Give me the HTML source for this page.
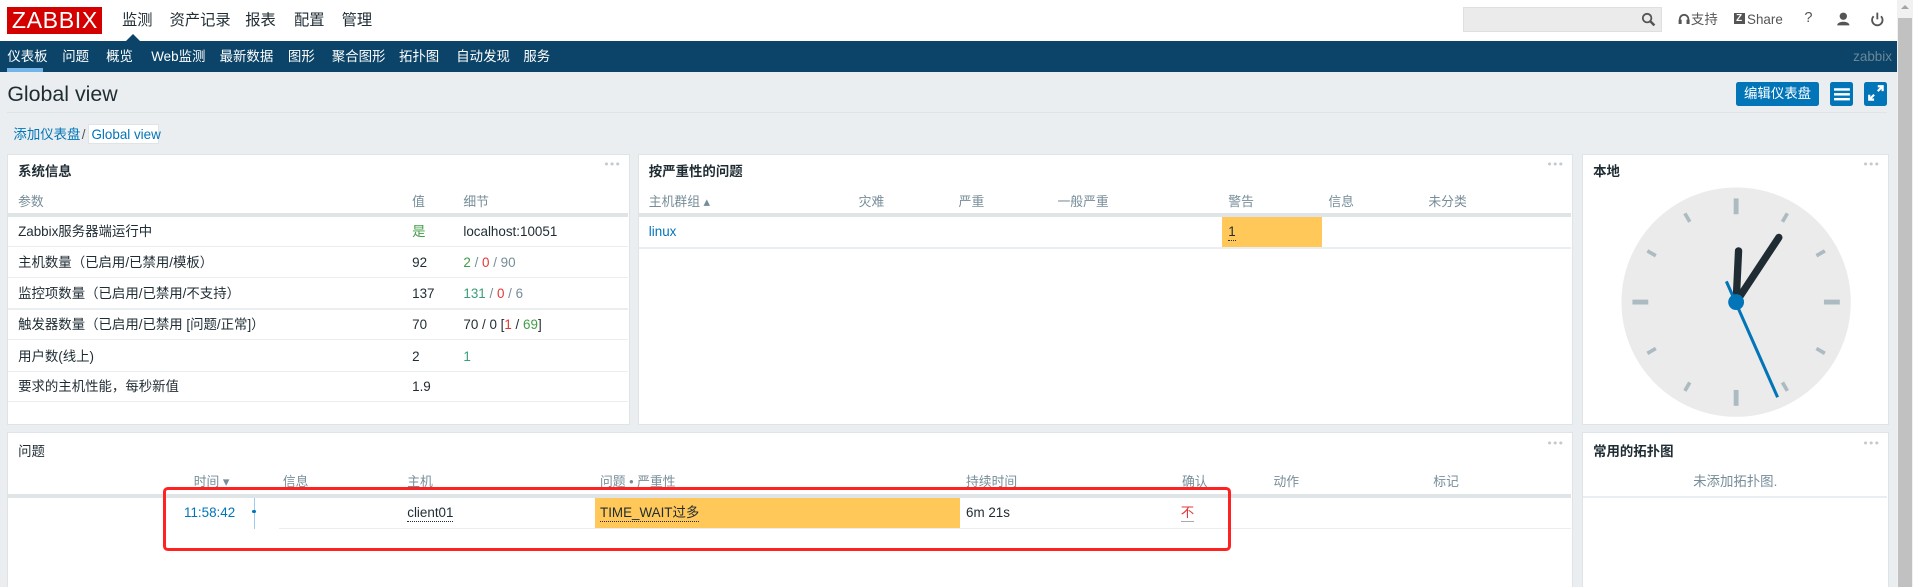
<!DOCTYPE html>
<html><head><meta charset="utf-8"><style>
html,body{margin:0;padding:0;width:1913px;height:587px;overflow:hidden;background:#ebeef0}
#w{zoom:1.22;position:relative;width:1568px;height:481px;font-family:"Liberation Sans","Noto Sans CJK SC",sans-serif;font-size:11px;color:#1f2c33}
.a{position:absolute;white-space:nowrap;line-height:13px}
.hdr{position:absolute;left:0;top:0;width:1555px;height:34px;background:#fff}
.nav{position:absolute;left:0;top:34px;width:1555px;height:25px;background:#0b4468}
.nav span{position:absolute;top:7px;color:#fff;font-size:11px;line-height:12px}
.wg{position:absolute;background:#fff;border:1px solid #dfe4e7;box-sizing:border-box}
.t{font-weight:bold;font-size:11px;color:#1f2c33}
.th{color:#768d99;font-size:10.5px}
.dots{position:absolute;right:6px;top:3px;color:#c3cbd0;font-size:6px;letter-spacing:1px;line-height:10px}
.ln{position:absolute;height:1px;background:#ebeef0}
.ln2{position:absolute;height:3px;background:#dfe4e7}
.g{color:#429e47}.r{color:#e33734}.gr{color:#768d99}.b{color:#0275b8}
</style></head><body><div id="w">
<div class="hdr">
 <div class="a" style="left:6px;top:6px;width:78px;height:22px;background:#d40000;color:#fff;font-size:19px;line-height:22px;text-align:center;letter-spacing:0.5px">ZABBIX</div>
 <span class="a" style="left:100px;top:10px;font-size:12.5px;line-height:14px">监测</span>
 <span class="a" style="left:139px;top:10px;font-size:12.5px;line-height:14px">资产记录</span>
 <span class="a" style="left:201px;top:10px;font-size:12.5px;line-height:14px">报表</span>
 <span class="a" style="left:241px;top:10px;font-size:12.5px;line-height:14px">配置</span>
 <span class="a" style="left:280px;top:10px;font-size:12.5px;line-height:14px">管理</span>
 <div class="a" style="left:103px;top:28px;width:0;height:0;border-left:6px solid transparent;border-right:6px solid transparent;border-bottom:6px solid #0b4468"></div>
 <div class="a" style="left:1199px;top:6px;width:163px;height:20px;background:#ebebeb;border:1px solid #dfdfdf;box-sizing:border-box"></div>
 <svg class="a" style="left:1345px;top:10px" width="12" height="12"><circle cx="5" cy="5" r="3.5" fill="none" stroke="#555" stroke-width="1.5"/><line x1="7.5" y1="7.5" x2="11" y2="11" stroke="#555" stroke-width="2"/></svg>
 <svg class="a" style="left:1375px;top:11px" width="10" height="10"><path d="M1.5 7V5a3.5 3.5 0 0 1 7 0v2" fill="none" stroke="#555" stroke-width="1.5"/><rect x="0.5" y="5.5" width="2.5" height="3.5" fill="#555"/><rect x="7" y="5.5" width="2.5" height="3.5" fill="#555"/></svg>
 <span class="a" style="left:1386px;top:10px;color:#555">支持</span>
 <div class="a" style="left:1421px;top:11px;width:9px;height:9px;background:#555;color:#fff;font-size:8px;font-weight:bold;line-height:9px;text-align:center">Z</div>
 <span class="a" style="left:1432px;top:10px;color:#555">Share</span>
 <span class="a" style="left:1479px;top:9px;color:#555;font-size:12px">?</span>
 <svg class="a" style="left:1505px;top:10px" width="12" height="12"><circle cx="6" cy="3.5" r="3" fill="#555"/><path d="M1 11c0-4 10-4 10 0z" fill="#555"/></svg>
 <svg class="a" style="left:1533px;top:10px" width="12" height="12"><path d="M3 3.5a4.3 4.3 0 1 0 6 0" fill="none" stroke="#555" stroke-width="1.5"/><line x1="6" y1="0.5" x2="6" y2="6" stroke="#555" stroke-width="1.5"/></svg>
</div>
<div class="nav">
 <span style="left:6px">仪表板</span><span style="left:51px">问题</span><span style="left:87px">概览</span><span style="left:124px">Web监测</span><span style="left:180px">最新数据</span><span style="left:236px">图形</span><span style="left:272px">聚合图形</span><span style="left:327px">拓扑图</span><span style="left:374px">自动发现</span><span style="left:429px">服务</span>
 <span style="left:1519px;color:#6b8796">zabbix</span>
 <div class="a" style="left:6px;top:22px;width:29px;height:3px;background:#74b5e8"></div>
</div>
<div class="a" style="left:1555px;top:0;width:13px;height:481px;background:#f1f1f1"></div>
<div class="a" style="left:1556px;top:15px;width:11px;height:466px;background:#c1c1c1"></div>
<div class="a" style="left:1558px;top:4px;width:0;height:0;border-left:4px solid transparent;border-right:4px solid transparent;border-bottom:4px solid #a3a3a3"></div>

<span class="a" style="left:6px;top:69px;font-size:17.5px;line-height:18px;color:#1f2c33">Global view</span>
<div class="a" style="left:1423px;top:67px;width:68px;height:20px;background:#0275b8;border-radius:2px;color:#fff;text-align:center;line-height:20px;font-size:11px">编辑仪表盘</div>
<div class="a" style="left:1500px;top:67px;width:19px;height:20px;background:#0275b8;border-radius:2px"></div>
<svg class="a" style="left:1503px;top:71px" width="13" height="12"><rect x="0" y="1" width="13" height="2" fill="#fff"/><rect x="0" y="5" width="13" height="2" fill="#fff"/><rect x="0" y="9" width="13" height="2" fill="#fff"/></svg>
<div class="a" style="left:1528px;top:67px;width:19px;height:20px;background:#0275b8;border-radius:2px"></div>
<svg class="a" style="left:1531px;top:70px" width="13" height="13"><path d="M8 1h4v4M12 1L8 5M5 12H1V8M1 12l4-4" fill="none" stroke="#fff" stroke-width="1.8"/></svg>
<div class="a" style="left:6px;top:92px;width:1541px;height:1px;background:#dfe4e7"></div>
<span class="a b" style="left:11px;top:104px">添加仪表盘</span><span class="a" style="left:67px;top:104px;color:#555">/</span>
<div class="a" style="left:72px;top:102px;width:58px;height:16px;background:#fff;border:1px solid #dfe4e7;box-sizing:border-box"></div>
<span class="a b" style="left:75px;top:104px">Global view</span>

<!-- system info -->
<div class="wg" style="left:6px;top:126px;width:510px;height:222px">
 <div class="dots">●●●</div>
 <span class="a t" style="left:8px;top:8px">系统信息</span>
 <span class="a th" style="left:8px;top:32px">参数</span><span class="a th" style="left:331px;top:32px">值</span><span class="a th" style="left:373px;top:32px">细节</span>
 <div class="ln2" style="left:0;top:48px;width:508px"></div>
 <span class="a" style="left:8px;top:57px">Zabbix服务器端运行中</span><span class="a g" style="left:331px;top:57px">是</span><span class="a" style="left:373px;top:57px">localhost:10051</span>
 <div class="ln" style="left:0;top:75px;width:508px"></div>
 <span class="a" style="left:8px;top:82px">主机数量（已启用/已禁用/模板）</span><span class="a" style="left:331px;top:82px">92</span><span class="a" style="left:373px;top:82px"><span class="g">2</span> <span class="gr">/</span> <span class="r">0</span> <span class="gr">/ 90</span></span>
 <div class="ln" style="left:0;top:100px;width:508px"></div>
 <span class="a" style="left:8px;top:108px">监控项数量（已启用/已禁用/不支持）</span><span class="a" style="left:331px;top:108px">137</span><span class="a" style="left:373px;top:108px"><span class="g" style="color:#3a9e77">131</span> <span class="gr">/</span> <span class="r">0</span> <span class="gr">/ 6</span></span>
 <div class="ln" style="left:0;top:126px;width:508px"></div>
 <span class="a" style="left:8px;top:133px">触发器数量（已启用/已禁用 [问题/正常]）</span><span class="a" style="left:331px;top:133px">70</span><span class="a" style="left:373px;top:133px">70 / 0 [<span class="r">1</span> / <span class="g">69</span>]</span>
 <div class="ln" style="left:0;top:151px;width:508px"></div>
 <span class="a" style="left:8px;top:159px">用户数(线上)</span><span class="a" style="left:331px;top:159px">2</span><span class="a g" style="left:373px;top:159px;color:#3a9e77">1</span>
 <div class="ln" style="left:0;top:177px;width:508px"></div>
 <span class="a" style="left:8px;top:184px">要求的主机性能，每秒新值</span><span class="a" style="left:331px;top:184px">1.9</span>
 <div class="ln" style="left:0;top:202px;width:508px"></div>
</div>

<!-- severity -->
<div class="wg" style="left:523px;top:126px;width:766px;height:222px">
 <div class="dots">●●●</div>
 <span class="a t" style="left:8px;top:8px">按严重性的问题</span>
 <span class="a th" style="left:8px;top:32px">主机群组 ▴</span><span class="a th" style="left:180px;top:32px">灾难</span><span class="a th" style="left:262px;top:32px">严重</span><span class="a th" style="left:343px;top:32px">一般严重</span><span class="a th" style="left:483px;top:32px">警告</span><span class="a th" style="left:565px;top:32px">信息</span><span class="a th" style="left:647px;top:32px">未分类</span>
 <div class="ln2" style="left:0;top:48px;width:764px"></div>
 <div class="a" style="left:478px;top:51px;width:82px;height:25px;background:#ffc859"></div>
 <span class="a b" style="left:8px;top:57px">linux</span><span class="a" style="left:483px;top:57px;border-bottom:1px dotted #1f2c33">1</span>
 <div class="ln" style="left:0;top:76px;width:764px"></div>
</div>

<!-- clock -->
<div class="wg" style="left:1297px;top:126px;width:251px;height:222px">
 <div class="dots">●●●</div>
 <span class="a t" style="left:8px;top:8px">本地</span>
 <svg class="a" style="left:29px;top:25px" width="192" height="192" viewBox="-96 -96 192 192">
  <circle r="94" fill="#ebebeb"/>
  <g stroke="#acbbc2" stroke-width="4">
   <line x1="0" y1="-85" x2="0" y2="-72" transform="rotate(0)"/><line x1="0" y1="-85" x2="0" y2="-72" transform="rotate(90)"/><line x1="0" y1="-85" x2="0" y2="-72" transform="rotate(180)"/><line x1="0" y1="-85" x2="0" y2="-72" transform="rotate(270)"/>
  </g>
  <g stroke="#acbbc2" stroke-width="3">
   <line x1="0" y1="-84" x2="0" y2="-76" transform="rotate(30)"/><line x1="0" y1="-84" x2="0" y2="-76" transform="rotate(60)"/><line x1="0" y1="-84" x2="0" y2="-76" transform="rotate(120)"/><line x1="0" y1="-84" x2="0" y2="-76" transform="rotate(150)"/><line x1="0" y1="-84" x2="0" y2="-76" transform="rotate(210)"/><line x1="0" y1="-84" x2="0" y2="-76" transform="rotate(240)"/><line x1="0" y1="-84" x2="0" y2="-76" transform="rotate(300)"/><line x1="0" y1="-84" x2="0" y2="-76" transform="rotate(330)"/>
  </g>
  <line x1="0" y1="0" x2="2" y2="-42" stroke="#1f2c33" stroke-width="6" stroke-linecap="round"/>
  <line x1="0" y1="0" x2="35" y2="-53" stroke="#1f2c33" stroke-width="6" stroke-linecap="round"/>
  <line x1="-8" y1="-17" x2="34" y2="78" stroke="#0275b8" stroke-width="2.5"/>
  <circle r="6.5" fill="#0275b8"/>
 </svg>
</div>

<!-- problems -->
<div class="wg" style="left:6px;top:354px;width:1283px;height:140px">
 <div class="dots">●●●</div>
 <span class="a t" style="left:8px;top:9px;font-weight:normal">问题</span>
 <span class="a th" style="left:152px;top:34px">时间 ▾</span><span class="a th" style="left:225px;top:34px">信息</span><span class="a th" style="left:327px;top:34px">主机</span><span class="a th" style="left:485px;top:34px">问题 • 严重性</span><span class="a th" style="left:785px;top:34px">持续时间</span><span class="a th" style="left:962px;top:34px">确认</span><span class="a th" style="left:1037px;top:34px">动作</span><span class="a th" style="left:1168px;top:34px">标记</span>
 <div class="ln2" style="left:0;top:50px;width:1281px"></div>
 <div class="a" style="left:481px;top:53px;width:299px;height:25px;background:#ffc859"></div>
 <div class="a" style="left:201px;top:53px;width:1px;height:26px;background:#9ccdee"></div>
 <div class="a" style="left:200px;top:63px;width:3px;height:3px;border-radius:2px;background:#0275b8"></div>
 <span class="a b" style="left:144px;top:59px">11:58:42</span>
 <span class="a" style="left:327px;top:59px;border-bottom:1px dotted #1f2c33">client01</span>
 <span class="a" style="left:485px;top:59px;border-bottom:1px dotted #1f2c33">TIME_WAIT过多</span>
 <span class="a" style="left:785px;top:59px">6m 21s</span>
 <span class="a r" style="left:961px;top:59px;border-bottom:1px solid #aaa">不</span>
 <div class="ln" style="left:222px;top:78px;width:1059px"></div>
</div>
<div class="a" style="left:134px;top:399px;width:875px;height:53px;border:3px solid #f22;border-radius:4px;box-sizing:border-box"></div>

<!-- maps -->
<div class="wg" style="left:1297px;top:354px;width:251px;height:140px">
 <div class="dots">●●●</div>
 <span class="a t" style="left:8px;top:9px">常用的拓扑图</span>
 <span class="a" style="left:0;width:249px;text-align:center;top:34px;color:#768d99">未添加拓扑图.</span>
 <div class="ln" style="left:0;top:52px;width:249px"></div>
</div>
</div></body></html>
